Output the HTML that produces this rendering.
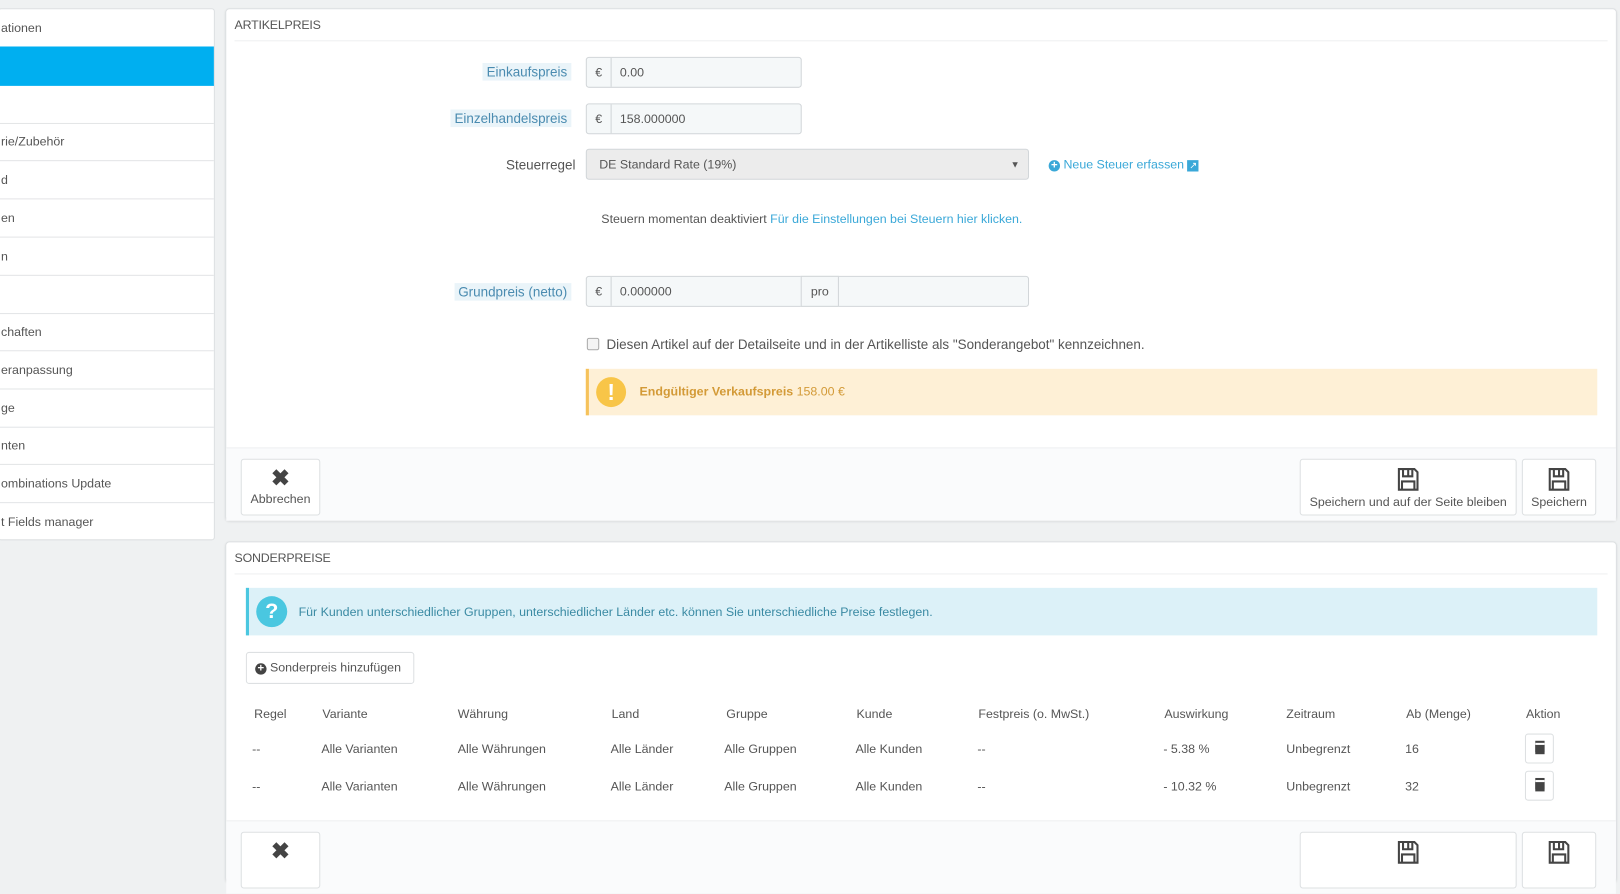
<!DOCTYPE html>
<html><head><meta charset="utf-8"><style>
*{box-sizing:border-box;margin:0;padding:0}
html,body{width:1620px;height:866px;overflow:hidden;background:#eff1f2}
body{font-family:"Liberation Sans",sans-serif;font-size:12px;color:#555}
#w{position:absolute;left:0;top:0;width:1568px;height:838px;transform:scale(1.03316);transform-origin:0 0}
.a{position:absolute}
.side{left:-2px;top:8px;width:210px;height:515px;background:#fff;border:1px solid #dde0e2;border-radius:3px}
.si{position:absolute;left:0;width:208px;height:37px;border-bottom:1px solid #e3e5e7;line-height:37px;padding-left:2px;color:#555;font-size:12px}
.panel{background:#fff;border:1px solid #dde0e2;border-radius:4px;box-shadow:0 1px 2px rgba(0,0,0,.08)}
.ph{position:absolute;left:8px;right:8px;top:0;height:31px;border-bottom:1px solid #eef0f1;line-height:30px;font-size:12px;color:#555;letter-spacing:-.2px}
.foot{position:absolute;left:0;right:0;height:71px;background:#fafbfc;border-top:1px solid #eef0f1}
.btn{position:absolute;background:#fff;border:1px solid #dde0e2;border-radius:3px;text-align:center;font-size:12px;color:#555}
.lbl{position:absolute;right:1011px;padding:1px 4px;background:#eaf4f9;color:#4a8bb0;font-size:13px}
.ig{position:absolute;height:30px;border:1px solid #d2d6d9;border-radius:3px;background:#f5f8f9;font-size:12px;color:#555;line-height:28px}
.ig .e{position:absolute;left:0;top:0;width:24px;height:28px;border-right:1px solid #d2d6d9;text-align:center}
th,td{font-weight:normal;text-align:left}
.th{position:absolute;top:684px;color:#555;font-size:12px}
.td{position:absolute;color:#555;font-size:12px}
.trash{position:absolute;width:28px;height:29px;border:1px solid #dde0e2;border-radius:3px;background:#fff}
</style></head><body><div id="w">
<div class="a side">
<div class="si" style="top:0">ationen</div>
<div class="si" style="top:36px;background:#00aff0;border-color:#00aff0;height:38px"></div>
<div class="si" style="top:74px"></div>
<div class="si" style="top:110px">rie/Zubehör</div>
<div class="si" style="top:147px">d</div>
<div class="si" style="top:184px">en</div>
<div class="si" style="top:221px">n</div>
<div class="si" style="top:258px"></div>
<div class="si" style="top:294px">chaften</div>
<div class="si" style="top:331px">eranpassung</div>
<div class="si" style="top:368px">ge</div>
<div class="si" style="top:404px">nten</div>
<div class="si" style="top:441px">ombinations Update</div>
<div class="si" style="top:478px;border:0">t Fields manager</div>
</div>

<div class="a panel" style="left:218px;top:8px;width:1347px;height:496px">
<div class="ph">ARTIKELPREIS</div>
<div class="lbl" style="top:52px">Einkaufspreis</div>
<div class="ig" style="left:348px;top:46px;width:209px"><span class="e">€</span><span style="margin-left:32px">0.00</span></div>
<div class="lbl" style="top:97px">Einzelhandelspreis</div>
<div class="ig" style="left:348px;top:91px;width:209px"><span class="e">€</span><span style="margin-left:32px">158.000000</span></div>
<div class="a" style="right:1007px;top:143px;font-size:13px;color:#555">Steuerregel</div>
<div class="ig" style="left:348px;top:135px;width:429px;background:#ececec;padding-left:12px">DE Standard Rate (19%)<span style="position:absolute;right:8px;font-size:9px">▼</span></div>
<div class="a" style="left:796px;top:143px;color:#3aa8d8;font-size:12px"><span style="display:inline-block;width:11px;height:11px;border-radius:50%;background:#3aa8d8;color:#fff;font-size:11px;line-height:10px;text-align:center;font-weight:bold">+</span> Neue Steuer erfassen <span style="display:inline-block;width:11px;height:11px;background:#3aa8d8;color:#fff;font-size:9px;line-height:11px;text-align:center">↗</span></div>
<div class="a" style="left:363px;top:196px;color:#555">Steuern momentan deaktiviert <span style="color:#3aa8d8">Für die Einstellungen bei Steuern hier klicken.</span></div>
<div class="lbl" style="top:265px">Grundpreis (netto)</div>
<div class="ig" style="left:348px;top:258px;width:429px"><span class="e">€</span><span style="margin-left:32px">0.000000</span><span style="position:absolute;left:207px;top:-1px;width:37px;height:30px;border:1px solid #d2d6d9;text-align:center;background:#f5f8f9">pro</span></div>
<div class="a" style="left:349px;top:318px;width:12px;height:12px;border:1px solid #aaa;border-radius:2px;background:#f4f4f4"></div>
<div class="a" style="left:368px;top:317px;font-size:13px;color:#555">Diesen Artikel auf der Detailseite und in der Artikelliste als "Sonderangebot" kennzeichnen.</div>
<div class="a" style="left:348px;top:348px;width:979px;height:45px;background:#fef0d6;border-left:3px solid #f6c25a">
<div class="a" style="left:7px;top:8px;width:29px;height:29px;border-radius:50%;background:#f8c548;color:#fff;font-weight:bold;font-size:22px;text-align:center;line-height:29px">!</div>
<div class="a" style="left:49px;top:15px;color:#d39a37;font-size:12px"><b>Endgültiger Verkaufspreis</b> 158.00 €</div></div>
<div class="foot" style="top:424px">
<div class="btn" style="left:14px;top:10px;width:77px;height:55px"><div style="font-size:22px;font-weight:bold;color:#444;line-height:26px;margin-top:5px">✖</div>Abbrechen</div>
<div class="btn" style="left:1039px;top:10px;width:210px;height:55px"><svg width="24" height="24" viewBox="0 0 24 24" style="margin-top:7px"><path d="M3 2h15l3 3v17H3z M7 2v7h9V2 M12 3v5 M6 14h12v8H6z" fill="none" stroke="#444" stroke-width="2"/></svg><br>Speichern und auf der Seite bleiben</div>
<div class="btn" style="left:1254px;top:10px;width:72px;height:55px"><svg width="24" height="24" viewBox="0 0 24 24" style="margin-top:7px"><path d="M3 2h15l3 3v17H3z M7 2v7h9V2 M12 3v5 M6 14h12v8H6z" fill="none" stroke="#444" stroke-width="2"/></svg><br>Speichern</div>
</div>
</div>

<div class="a panel" style="left:218px;top:524px;width:1347px;height:330px">
<div class="ph">SONDERPREISE</div>
<div class="a" style="left:19px;top:44px;width:1308px;height:46px;background:#dcf1f8;border-left:3px solid #4ac7e0">
<div class="a" style="left:7px;top:8px;width:30px;height:30px;border-radius:50%;background:#4ac7e0;color:#fff;font-weight:bold;font-size:21px;text-align:center;line-height:30px">?</div>
<div class="a" style="left:48px;top:16px;color:#3a8aa3;font-size:12px">Für Kunden unterschiedlicher Gruppen, unterschiedlicher Länder etc. können Sie unterschiedliche Preise festlegen.</div></div>
<div class="btn" style="left:19px;top:106px;width:163px;height:31px;line-height:29px;text-align:left;padding-left:8px"><span style="display:inline-block;width:11px;height:11px;border-radius:50%;background:#444;color:#fff;font-size:11px;line-height:10px;text-align:center;font-weight:bold">+</span> Sonderpreis hinzufügen</div>
</div>
<div class="th" style="left:246px">Regel</div><div class="th" style="left:312px">Variante</div><div class="th" style="left:443px">Währung</div><div class="th" style="left:592px">Land</div><div class="th" style="left:703px">Gruppe</div><div class="th" style="left:829px">Kunde</div><div class="th" style="left:947px">Festpreis (o. MwSt.)</div><div class="th" style="left:1127px">Auswirkung</div><div class="th" style="left:1245px">Zeitraum</div><div class="th" style="left:1361px">Ab (Menge)</div><div class="th" style="left:1477px">Aktion</div>

<div class="td" style="top:718px;left:244px">--</div><div class="td" style="top:718px;left:311px">Alle Varianten</div><div class="td" style="top:718px;left:443px">Alle Währungen</div><div class="td" style="top:718px;left:591px">Alle Länder</div><div class="td" style="top:718px;left:701px">Alle Gruppen</div><div class="td" style="top:718px;left:828px">Alle Kunden</div><div class="td" style="top:718px;left:946px">--</div><div class="td" style="top:718px;left:1126px">- 5.38 %</div><div class="td" style="top:718px;left:1245px">Unbegrenzt</div><div class="td" style="top:718px;left:1360px">16</div>
<div class="trash" style="left:1476px;top:710px"><div style="position:absolute;left:9px;top:8px;width:9px;height:11px;background:#444;border-top:2px solid #fff;box-shadow:0 -2px 0 #444"></div></div>
<div class="td" style="top:754px;left:244px">--</div><div class="td" style="top:754px;left:311px">Alle Varianten</div><div class="td" style="top:754px;left:443px">Alle Währungen</div><div class="td" style="top:754px;left:591px">Alle Länder</div><div class="td" style="top:754px;left:701px">Alle Gruppen</div><div class="td" style="top:754px;left:828px">Alle Kunden</div><div class="td" style="top:754px;left:946px">--</div><div class="td" style="top:754px;left:1126px">- 10.32 %</div><div class="td" style="top:754px;left:1245px">Unbegrenzt</div><div class="td" style="top:754px;left:1360px">32</div>
<div class="trash" style="left:1476px;top:746px"><div style="position:absolute;left:9px;top:8px;width:9px;height:11px;background:#444;border-top:2px solid #fff;box-shadow:0 -2px 0 #444"></div></div>

<div class="foot" style="left:219px;width:1345px;top:794px">
<div class="btn" style="left:14px;top:10px;width:77px;height:55px"><div style="font-size:22px;font-weight:bold;color:#444;line-height:26px;margin-top:5px">✖</div></div>
<div class="btn" style="left:1039px;top:10px;width:210px;height:55px"><svg width="24" height="24" viewBox="0 0 24 24" style="margin-top:7px"><path d="M3 2h15l3 3v17H3z M7 2v7h9V2 M12 3v5 M6 14h12v8H6z" fill="none" stroke="#444" stroke-width="2"/></svg></div>
<div class="btn" style="left:1254px;top:10px;width:72px;height:55px"><svg width="24" height="24" viewBox="0 0 24 24" style="margin-top:7px"><path d="M3 2h15l3 3v17H3z M7 2v7h9V2 M12 3v5 M6 14h12v8H6z" fill="none" stroke="#444" stroke-width="2"/></svg></div>
</div>
</div></body></html>
